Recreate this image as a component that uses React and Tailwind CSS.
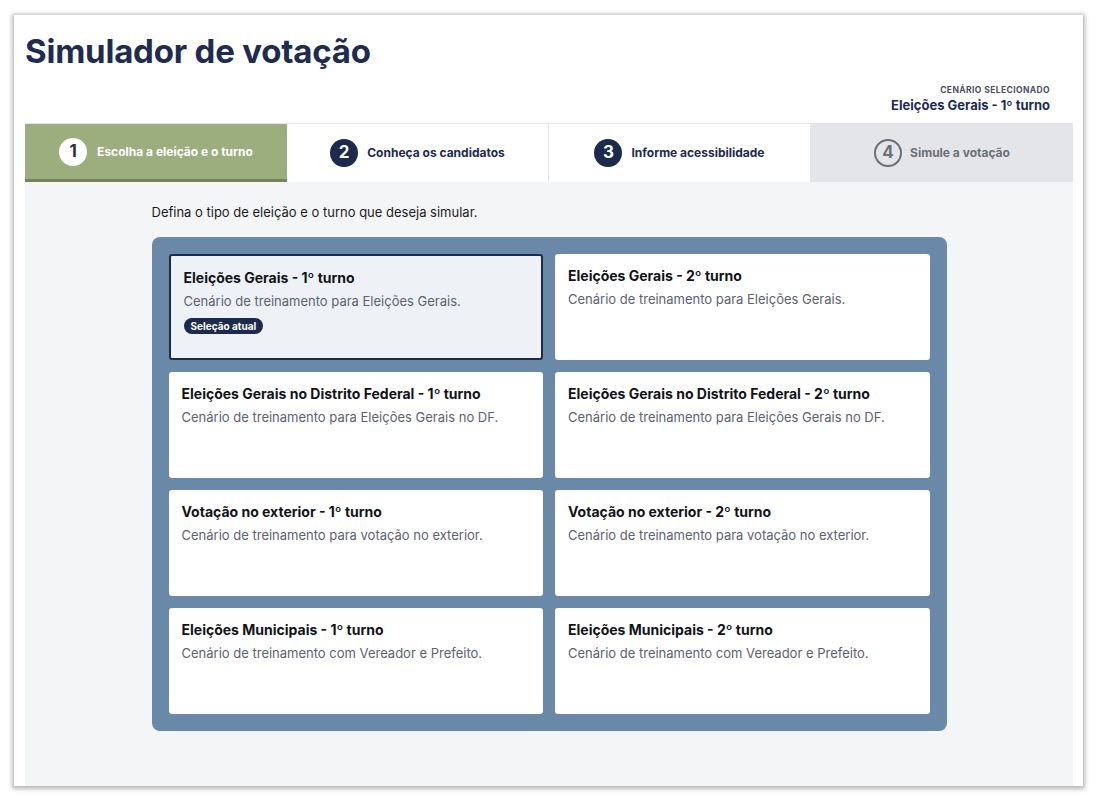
const steps = [
  { n: 1, label: 'Escolha a eleição e o turno', state: 'active' },
  { n: 2, label: 'Conheça os candidatos', state: 'todo' },
  { n: 3, label: 'Informe acessibilidade', state: 'todo' },
  { n: 4, label: 'Simule a votação', state: 'disabled' },
]

const scenarios = [
  { title: 'Eleições Gerais - 1º turno', desc: 'Cenário de treinamento para Eleições Gerais.', selected: true },
  { title: 'Eleições Gerais - 2º turno', desc: 'Cenário de treinamento para Eleições Gerais.' },
  { title: 'Eleições Gerais no Distrito Federal - 1º turno', desc: 'Cenário de treinamento para Eleições Gerais no DF.' },
  { title: 'Eleições Gerais no Distrito Federal - 2º turno', desc: 'Cenário de treinamento para Eleições Gerais no DF.' },
  { title: 'Votação no exterior - 1º turno', desc: 'Cenário de treinamento para votação no exterior.' },
  { title: 'Votação no exterior - 2º turno', desc: 'Cenário de treinamento para votação no exterior.' },
  { title: 'Eleições Municipais - 1º turno', desc: 'Cenário de treinamento com Vereador e Prefeito.' },
  { title: 'Eleições Municipais - 2º turno', desc: 'Cenário de treinamento com Vereador e Prefeito.' },
]

function StepTab({ n, label, state }) {
  if (state === 'active') {
    return (
      <div className="flex items-center justify-center gap-[10px] bg-[#9dae7e] border-b-[3px] border-[#76845c]">
        <span className="flex h-[28px] w-[28px] items-center justify-center rounded-full bg-white text-[17px] font-bold text-[#2b2f36]">
          {n}
        </span>
        <span className="text-[12px] font-bold text-white">{label}</span>
      </div>
    )
  }
  if (state === 'disabled') {
    return (
      <div className="flex items-center justify-center gap-[8px] bg-[#e4e5e9]">
        <span className="flex h-[28px] w-[28px] items-center justify-center rounded-full border-2 border-[#6b6f78] text-[17px] font-bold text-[#6b6f78]">
          {n}
        </span>
        <span className="text-[12px] font-bold text-[#6b6f78]">{label}</span>
      </div>
    )
  }
  return (
    <div className="flex items-center justify-center gap-[9px] bg-white border-r border-[#e3e5e9]">
      <span className="flex h-[28px] w-[28px] items-center justify-center rounded-full bg-[#1c2a4e] text-[17px] font-bold text-white">
        {n}
      </span>
      <span className="text-[12px] font-bold text-[#1c2a4e]">{label}</span>
    </div>
  )
}

function ScenarioCard({ title, desc, selected }) {
  return (
    <div
      className={
        selected
          ? 'h-[106px] rounded-[3px] border-2 border-[#1c2a4e] bg-[#eef2f7] px-[13px] pt-[12px]'
          : 'h-[106px] rounded-[3px] bg-white px-[13px] pt-[12px]'
      }
    >
      <p className="text-[14px] font-bold leading-[20px] text-[#111318]">{title}</p>
      <p className="mt-[4px] text-[13px] leading-[18px] text-[#5d6270]">{desc}</p>
      {selected && (
        <span className="mt-[8px] inline-block rounded-full bg-[#1c2a4e] px-[7px] py-[2px] text-[10px] font-bold leading-[12px] text-white">
          Seleção atual
        </span>
      )}
    </div>
  )
}

export default function App() {
  return (
    <div className="min-h-[802px] bg-white pl-[14px] pr-[17px] pt-[15px] pb-[16px] font-['Inter','Noto_Sans',sans-serif]">
      <div className="flex h-[771px] flex-col bg-white pl-[11px] pr-[10px] shadow-[0_1px_4px_2px_rgba(0,0,0,0.28)]">
        {/* header */}
        <h1 className="pt-[16px] text-[33px] font-bold leading-[40px] tracking-[-0.2px] text-[#1e2c52]">
          Simulador de votação
        </h1>
        <div className="mt-[14px] flex flex-col items-end pr-[23px]">
          <p className="text-[8.5px] font-bold uppercase leading-[11px] tracking-[0.4px] text-[#4b5060]">
            Cenário selecionado
          </p>
          <p className="text-[13px] font-bold leading-[18px] text-[#1e2c52]">Eleições Gerais - 1º turno</p>
        </div>

        {/* steps */}
        <div className="mt-[9px] grid h-[59px] grid-cols-4 border-t border-[#e3e5e9]">
          {steps.map((s) => (
            <StepTab key={s.n} {...s} />
          ))}
        </div>

        {/* main */}
        <div className="flex flex-1 justify-center bg-[#f4f5f7]">
          <div className="w-[795px] pt-[21px]">
            <p className="text-[13px] leading-[18px] text-[#1a1c22]">
              Defina o tipo de eleição e o turno que deseja simular.
            </p>
            <div className="mt-[16px] grid grid-cols-2 gap-x-[12px] gap-y-[12px] rounded-[8px] bg-[#6a88a8] px-[17px] py-[17px]">
              {scenarios.map((s) => (
                <ScenarioCard key={s.title} {...s} />
              ))}
            </div>
          </div>
        </div>
      </div>
    </div>
  )
}
